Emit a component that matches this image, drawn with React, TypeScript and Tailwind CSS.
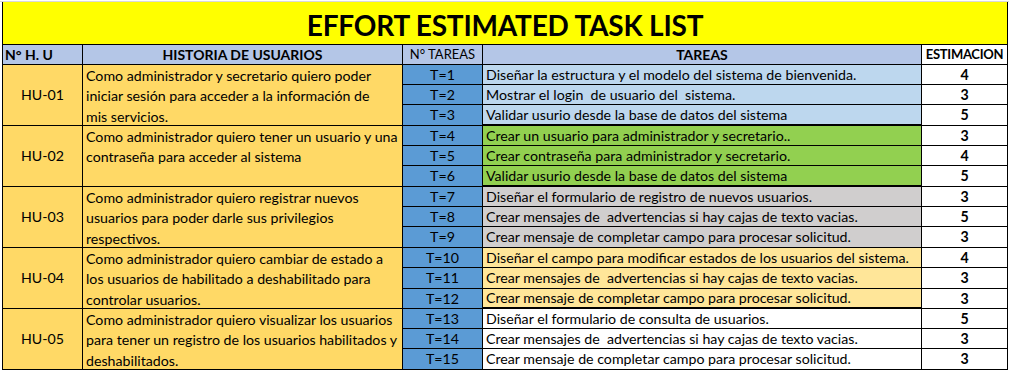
import React from "react";

type Task = [string, string, number];
type Story = { hu: string; lines: string[]; bg: string; tasks: Task[] };

const stories: Story[] = [
  {
    hu: "HU-01",
    lines: [
      "Como administrador y secretario quiero poder",
      "iniciar sesión para acceder a la información de",
      "mis servicios.",
    ],
    bg: "bg-[#bdd7ee]",
    tasks: [
      ["T=1", "Diseñar la estructura y el modelo del sistema de bienvenida.", 4],
      ["T=2", "Mostrar el login  de usuario del  sistema.", 3],
      ["T=3", "Validar usurio desde la base de datos del sistema", 5],
    ],
  },
  {
    hu: "HU-02",
    lines: ["Como administrador quiero tener un usuario y una", "contraseña para acceder al sistema"],
    bg: "bg-[#92d050]",
    tasks: [
      ["T=4", "Crear un usuario para administrador y secretario..", 3],
      ["T=5", "Crear contraseña para administrador y secretario.", 4],
      ["T=6", "Validar usurio desde la base de datos del sistema", 5],
    ],
  },
  {
    hu: "HU-03",
    lines: [
      "Como administrador quiero registrar nuevos",
      "usuarios para poder darle sus privilegios",
      "respectivos.",
    ],
    bg: "bg-[#d0cece]",
    tasks: [
      ["T=7", "Diseñar el formulario de registro de nuevos usuarios.", 3],
      ["T=8", "Crear mensajes de  advertencias si hay cajas de texto vacias.", 5],
      ["T=9", "Crear mensaje de completar campo para procesar solicitud.", 3],
    ],
  },
  {
    hu: "HU-04",
    lines: [
      "Como administrador quiero cambiar de estado a",
      "los usuarios de habilitado a deshabilitado para",
      "controlar usuarios.",
    ],
    bg: "bg-[#ffe699]",
    tasks: [
      ["T=10", "Diseñar el campo para modificar estados de los usuarios del sistema.", 4],
      ["T=11", "Crear mensajes de  advertencias si hay cajas de texto vacias.", 3],
      ["T=12", "Crear mensaje de completar campo para procesar solicitud.", 3],
    ],
  },
  {
    hu: "HU-05",
    lines: [
      "Como administrador quiero visualizar los usuarios",
      "para tener un registro de los usuarios habilitados y",
      "deshabilitados.",
    ],
    bg: "bg-white",
    tasks: [
      ["T=13", "Diseñar el formulario de consulta de usuarios.", 5],
      ["T=14", "Crear mensajes de  advertencias si hay cajas de texto vacias.", 3],
      ["T=15", "Crear mensaje de completar campo para procesar solicitud.", 3],
    ],
  },
];

// grupos con línea gruesa debajo en la columna de tareas
const thick = new Set(["T=3", "T=6", "T=12"]);

export default function App() {
  return (
    <div className="min-h-screen bg-white text-black font-['Lato','Liberation_Sans',sans-serif]">
      <div className="h-[1px]" />
      <div className="h-[1px] bg-[#d9d9d9]" />

      <div className="ml-[2px] w-fit border-l border-black grid grid-cols-[80px_320px_80px_439px_86px] grid-rows-[43px_20px_20px_20px_21px_20px_20px_21px_20px_20px_21px_20px_21px_20px_20px_20px_21px]">
        {/* Título */}
        <div className="col-span-5 bg-[#ffff00] border-r border-b border-black flex items-center justify-center">
          <h1 className="text-[28px] font-bold leading-none tracking-[-0.2px] pt-[3px]">EFFORT ESTIMATED TASK LIST</h1>
        </div>

        {/* Cabecera */}
        <div className="bg-[#b4c6e7] border-r border-b border-black flex items-center pl-[2px] text-[14px] font-bold">
          N° H. U
        </div>
        <div className="bg-[#b4c6e7] border-r border-b border-black flex items-center justify-center text-[14px] font-bold">
          HISTORIA DE USUARIOS
        </div>
        <div className="bg-[#b4c6e7] border-r border-b border-black flex items-center justify-center text-[13px]">
          N° TAREAS
        </div>
        <div className="bg-[#b4c6e7] border-r border-b border-black flex items-center justify-center text-[14px] font-bold">
          TAREAS
        </div>
        <div className="bg-white border-r border-b border-black flex items-center justify-center text-[13px] font-bold tracking-[-0.3px]">
          ESTIMACION
        </div>

        {stories.map((s) =>
          s.tasks.map((t, i) => (
            <React.Fragment key={t[0]}>
              {i === 0 && (
                <>
                  <div className="row-span-3 bg-[#ffd966] border-r border-b border-black flex items-center justify-center text-[14.2px]">
                    {s.hu}
                  </div>
                  <div className="row-span-3 bg-[#ffd966] border-r border-b border-black pl-[3px] pt-[1px] text-[14.2px] leading-[20.3px]">
                    {s.lines.map((l) => (
                      <div key={l} className="whitespace-nowrap">{l}</div>
                    ))}
                  </div>
                </>
              )}
              <div className="bg-[#5b9bd5] border-r border-b border-black flex items-center justify-center text-[14.2px]">
                {t[0]}
              </div>
              <div
                className={`${s.bg} border-r border-black flex items-center pl-[3px] text-[14.2px] whitespace-pre ${
                  thick.has(t[0]) ? "border-b-2" : "border-b"
                }`}
              >
                {t[1]}
              </div>
              <div className="bg-white border-r border-b border-black flex items-center justify-center text-[14.2px] font-bold">
                {t[2]}
              </div>
            </React.Fragment>
          ))
        )}
      </div>
    </div>
  );
}
